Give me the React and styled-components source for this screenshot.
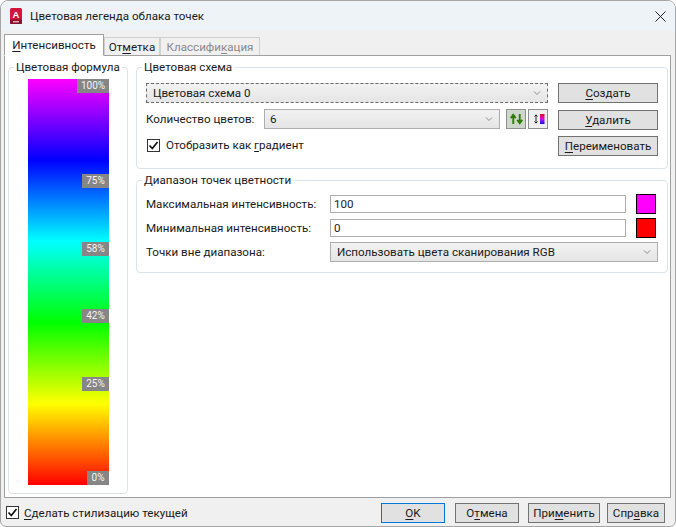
import React from "react";
import styled, { createGlobalStyle } from "styled-components";

const Global = createGlobalStyle`
  html, body { margin: 0; padding: 0; background: #ffffff; }
  * { box-sizing: border-box; }
  u { text-underline-offset: 2px; text-decoration-thickness: 1px; }
`;

const Win = styled.div`
  width: 676px; height: 527px;
  display: flex; flex-direction: column;
  background: #f0f0f0;
  border: 1px solid #a6a6a6;
  border-radius: 8px 8px 6px 6px;
  overflow: hidden;
  font-family: Roboto, "Noto Sans", sans-serif;
  font-size: 11.6px;
  color: #1a1a1a;
`;
const TitleBar = styled.div`
  height: 30px; flex: none;
  display: flex; align-items: center; gap: 8px;
  padding: 0 9px;
  background: #eef3f8;
`;
const Title = styled.div`
  flex: 1; color: #1a1a1a;
`;
const TabStrip = styled.div`
  height: 24px; flex: none;
  display: flex; align-items: flex-end;
  padding: 0 0 0 3px;
`;
const Tab = styled.div`
  height: ${p => (p.$active ? 22 : 18)}px;
  width: ${p => p.$w}px;
  display: flex; align-items: center; justify-content: center;
  border: 1px solid ${p => (p.$active ? "#a0a0a0" : "#d0d0d0")};
  border-bottom: ${p => (p.$active ? "1px solid #fff" : "none")};
  background: ${p => (p.$active ? "#fff" : "#f0f0f0")};
  color: ${p => (p.$disabled ? "#8a8a8a" : "#1a1a1a")};
  margin-bottom: ${p => (p.$active ? -1 : 0)}px;
  position: relative;
  z-index: ${p => (p.$active ? 1 : 0)};
`;
const Panel = styled.div`
  flex: none; height: 443px;
  margin: 0 4px 0 3px;
  background: #fff;
  border: 1px solid #a0a0a0;
  padding: 3px;
  display: flex; gap: 8px;
`;
const Group = styled.fieldset`
  margin: 0;
  min-width: 0;
  border: 1px solid #dce3ea;
  border-radius: 4px;
  padding: ${p => p.$pad};
`;
const Legend = styled.legend`
  padding: 0 2px;
  margin-left: ${p => p.$ml}px;
  line-height: 16px;
  white-space: nowrap;
  color: #1a1a1a;
`;
const FormulaGroup = styled(Group)`
  width: 120px; height: 435px; flex: none;
  display: flex; flex-direction: column;
`;
const Gradient = styled.div`
  position: relative;
  flex: 1;
  background: linear-gradient(to bottom, #ff00ff 0%, #0000ff 20%, #00ffff 40%, #00ff00 60%, #ffff00 80%, #ff0000 100%);
`;
const Stop = styled.div`
  position: absolute; right: 0;
  top: ${p => p.$top}px;
  width: ${p => p.$w}px; height: 14px;
  background: #868686;
  color: #f4f4f4;
  font-size: 10px; line-height: 14px; text-align: center;
`;
const RightCol = styled.div`
  flex: none; width: 532px;
  display: flex; flex-direction: column; gap: 3px;
`;
const SchemeBody = styled.div`
  display: flex; gap: 10px;
`;
const SchemeLeft = styled.div`
  flex: 1; display: flex; flex-direction: column;
`;
const SchemeRight = styled.div`
  width: 100px; flex: none; display: flex; flex-direction: column;
`;
const Row = styled.div`
  display: flex; align-items: center;
  height: ${p => p.$h}px;
  margin-top: ${p => p.$mt || 0}px;
`;
const CountLabel = styled.span`
  width: 118px; flex: none;
`;
const Select = styled.div`
  height: 20px;
  width: ${p => (p.$w ? p.$w + "px" : "auto")};
  flex: ${p => (p.$w ? "none" : "1")};
  display: flex; align-items: center; justify-content: space-between;
  padding: 0 6px 0 ${p => p.$pl || 6}px;
  border: 1px solid #adadad;
  background: linear-gradient(to bottom, #f2f2f2, #e5e5e5);
  color: #1a1a1a;
`;
const FocusSelect = styled(Select)`
  border: 1px dashed #6a6a6a;
`;
const Chevron = () => (
  <svg width="8" height="6" viewBox="0 0 8 6"><path d="M1 1.5 L4 4.5 L7 1.5" fill="none" stroke="#8a8a8a" strokeWidth="1" /></svg>
);
const IconBtn = styled.div`
  width: 20px; height: 20px; flex: none;
  margin-left: ${p => p.$ml}px;
  display: flex; align-items: center; justify-content: center;
  border: 1px solid #8f8f8f;
  background: ${p => p.$bg};
`;
const Btn = styled.div`
  width: ${p => (p.$w ? p.$w + "px" : "100%")};
  height: 20px;
  flex: none;
  margin-top: ${p => p.$mt || 0}px;
  margin-left: ${p => p.$ml || 0}px;
  display: flex; align-items: center; justify-content: center;
  background: #e1e1e1;
  border: 1px solid ${p => (p.$default ? "#0078d7" : "#727272")};
  color: #1a1a1a;
`;
const CheckRow = styled.div`
  display: flex; align-items: center; gap: ${p => p.$gap}px;
  margin-left: ${p => p.$ml || 0}px;
`;
const CheckBox = styled.div`
  width: 13px; height: 13px; flex: none;
  display: flex; align-items: center; justify-content: center;
  border: 1px solid #333;
  background: #fff;
`;
const Check = () => (
  <CheckBox>
    <svg width="11" height="11" viewBox="0 0 11 11"><path d="M1.5 5.5 L4.3 8.5 L9.5 2" fill="none" stroke="#111" strokeWidth="1.7" /></svg>
  </CheckBox>
);
const RangeGrid = styled.div`
  display: grid;
  grid-template-columns: 184px 1fr 32px;
  grid-auto-rows: 20px;
  row-gap: 4px;
  align-items: center;
`;
const Input = styled.div`
  height: 18px;
  display: flex; align-items: center;
  padding-left: 3px;
  background: #fff;
  border: 1px solid #adadad;
`;
const Swatch = styled.div`
  width: 20px; height: 20px;
  margin-left: 10px;
  border: 1px solid #000;
  background: ${p => p.$c};
`;
const WideSelect = styled(Select)`
  grid-column: 2 / 4;
`;
const Footer = styled.div`
  flex: 1;
  display: flex; align-items: center;
  padding: 1px 10px 0 5px;
`;
const Spacer = styled.div`flex: 1;`;

const Logo = () => (
  <svg width="12" height="16" viewBox="0 0 12 16">
    <rect x="0" y="0" width="12" height="16" rx="1.5" fill="#d3143c" />
    <rect x="0" y="11.5" width="12" height="4.5" rx="1" fill="#8a1030" />
    <text x="6" y="9.5" textAnchor="middle" fontFamily="Liberation Sans" fontWeight="700" fontSize="9.5" fill="#fff">A</text>
    <rect x="3" y="13" width="6" height="1.4" fill="#e0b0bc" />
  </svg>
);
const CloseIcon = () => (
  <svg width="11" height="11" viewBox="0 0 11 11"><path d="M0.5 0.5 L10.5 10.5 M10.5 0.5 L0.5 10.5" stroke="#222" strokeWidth="1" /></svg>
);
const SwapIcon = () => (
  <svg width="13" height="12" viewBox="0 0 14 13">
    <path d="M3.5 12 V3 M0.8 5.5 L3.5 2 L6.2 5.5" fill="none" stroke="#2f7d00" strokeWidth="2" />
    <path d="M10.5 1 V10 M7.8 7.5 L10.5 11 L13.2 7.5" fill="none" stroke="#2f7d00" strokeWidth="2" />
  </svg>
);
const InvertIcon = () => (
  <svg width="16" height="14" viewBox="0 0 16 14">
    <defs>
      <linearGradient id="bar" x1="0" y1="0" x2="0" y2="1">
        <stop offset="0" stopColor="#e01010" />
        <stop offset="0.5" stopColor="#d010e0" />
        <stop offset="1" stopColor="#1010f0" />
      </linearGradient>
    </defs>
    <path d="M6 3 V11 M4.5 4.5 L6 2.8 L7.5 4.5 M4.5 9.5 L6 11.2 L7.5 9.5" fill="none" stroke="#222" strokeWidth="1" />
    <rect x="10" y="2" width="4.5" height="10" fill="url(#bar)" />
  </svg>
);

const stops = [
  { t: "100%", top: 0, w: 32 },
  { t: "75%", top: 95, w: 27 },
  { t: "58%", top: 163, w: 27 },
  { t: "42%", top: 230, w: 27 },
  { t: "25%", top: 298, w: 27 },
  { t: "0%", top: 392, w: 22 },
];

export default function App() {
  return (
    <>
      <Global />
      <Win>
        <TitleBar>
          <Logo />
          <Title>Цветовая легенда облака точек</Title>
          <CloseIcon />
        </TitleBar>
        <TabStrip>
          <Tab $active $w={100}><span><u>И</u>нтенсивность</span></Tab>
          <Tab $w={56}><span>От<u>м</u>етка</span></Tab>
          <Tab $w={100} $disabled><span>Классифи<u>к</u>ация</span></Tab>
        </TabStrip>
        <Panel>
          <FormulaGroup $pad="4px 18px 8px 19px">
            <Legend $ml={-14}>Цветовая формула</Legend>
            <Gradient>
              {stops.map(s => <Stop key={s.t} $top={s.top} $w={s.w}>{s.t}</Stop>)}
            </Gradient>
          </FormulaGroup>
          <RightCol>
            <Group $pad="8px 9px 12px 9px">
              <Legend $ml={-4}>Цветовая схема</Legend>
              <SchemeBody>
                <SchemeLeft>
                  <Row $h={20}>
                    <FocusSelect><span>Цветовая схема 0</span><Chevron /></FocusSelect>
                  </Row>
                  <Row $h={20} $mt={6}>
                    <CountLabel>Количество цветов:</CountLabel>
                    <Select $w={236} $pl={5}><span>6</span><Chevron /></Select>
                    <IconBtn $ml={6} $bg="#cfd6cb"><SwapIcon /></IconBtn>
                    <IconBtn $ml={2} $bg="#f0f0f0"><InvertIcon /></IconBtn>
                  </Row>
                  <Row $h={14} $mt={9}>
                    <CheckRow $ml={1} $gap={6}><Check /><span>Отобразить как <u>г</u>радиент</span></CheckRow>
                  </Row>
                </SchemeLeft>
                <SchemeRight>
                  <Btn><span><u>С</u>оздать</span></Btn>
                  <Btn $mt={7}><span><u>У</u>далить</span></Btn>
                  <Btn $mt={6}><span><u>П</u>ереименовать</span></Btn>
                </SchemeRight>
              </SchemeBody>
            </Group>
            <Group $pad="6px 9px 10px 9px">
              <Legend $ml={-4}>Диапазон точек цветности</Legend>
              <RangeGrid>
                <span>Максимальная интенсивность:</span>
                <Input>100</Input>
                <Swatch $c="#ff00ff" />
                <span>Минимальная интенсивность:</span>
                <Input>0</Input>
                <Swatch $c="#ff0000" />
                <span>Точки вне диапазона:</span>
                <WideSelect><span>Использовать цвета сканирования RGB</span><Chevron /></WideSelect>
              </RangeGrid>
            </Group>
          </RightCol>
        </Panel>
        <Footer>
          <CheckRow $gap={5}><Check /><span><u>С</u>делать стилизацию текущей</span></CheckRow>
          <Spacer />
          <Btn $default $w={64}><span><u>O</u>K</span></Btn>
          <Btn $w={64} $ml={10}><span>О<u>т</u>мена</span></Btn>
          <Btn $w={72} $ml={9}><span>При<u>м</u>енить</span></Btn>
          <Btn $w={58} $ml={7}><span>Спр<u>а</u>вка</span></Btn>
        </Footer>
      </Win>
    </>
  );
}
